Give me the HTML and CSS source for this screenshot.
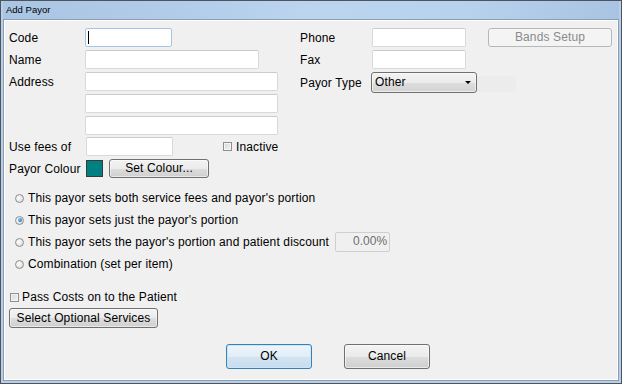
FILE: index.html
```html
<!DOCTYPE html>
<html>
<head>
<meta charset="utf-8">
<link rel="stylesheet" href="styles.css">
</head>
<body>
<div class="window">
  <div class="titlebar">Add Payor</div>
  <div class="client">
    <div class="top">
      <div class="leftcol">
        <div class="row"><span class="label">Code</span><div class="input focused w87"><span class="caret"></span></div></div>
        <div class="row"><span class="label">Name</span><div class="input w174"></div></div>
        <div class="row"><span class="label">Address</span><div class="input w193"></div></div>
        <div class="row"><span class="label"></span><div class="input w193"></div></div>
        <div class="row"><span class="label"></span><div class="input w193"></div></div>
        <div class="row row-fees"><span class="label label77">Use fees of</span><div class="input w87"></div>
          <span class="check inactive-check"></span><span class="checktext">Inactive</span></div>
        <div class="row row-last"><span class="label label77">Payor Colour</span><span class="swatch"></span><div class="btn btn-colour">Set Colour...</div></div>
      </div>
      <div class="rightcol">
        <div class="row"><span class="label label72">Phone</span><div class="input w94"></div><div class="btn btn-disabled btn-bands">Bands Setup</div></div>
        <div class="row"><span class="label label72">Fax</span><div class="input w94"></div></div>
        <div class="row row-select"><span class="label label71">Payor Type</span><div class="select">Other<span class="arrow"></span></div><span class="ghost"></span></div>
      </div>
    </div>
    <div class="radios">
      <div class="radio-row"><span class="radio"></span><span>This payor sets both service fees and payor's portion</span></div>
      <div class="radio-row"><span class="radio selected"></span><span>This payor sets just the payor's portion</span></div>
      <div class="radio-row"><span class="radio"></span><span>This payor sets the payor's portion and patient discount</span><div class="input disabled pct">0.00%</div></div>
      <div class="radio-row"><span class="radio"></span><span>Combination (set per item)</span></div>
    </div>
    <div class="pass-row"><span class="check"></span><span class="checktext">Pass Costs on to the Patient</span></div>
    <div class="btn btn-optional">Select Optional Services</div>
    <div class="actions">
      <div class="btn btn-action btn-default">OK</div>
      <div class="btn btn-action">Cancel</div>
    </div>
  </div>
</div>
</body>
</html>
```

FILE: styles.css
```css
* { box-sizing: border-box; }
html, body { margin: 0; padding: 0; background: #f0f0f0; }
body { font-family: "Liberation Sans", Arial, sans-serif; font-size: 12px; letter-spacing: 0.13px; color: #000; }

.window {
  width: 622px; height: 384px;
  border: 1px solid #4f545b;
  background: #b7cfe9;
  padding: 0 2px 2px;
  display: flex; flex-direction: column;
}
.titlebar {
  height: 18px; flex: none;
  padding-left: 3px;
  font-size: 9.5px; line-height: 17px; letter-spacing: 0;
  color: #000;
  background: linear-gradient(90deg, #a9c5e3 0%, #b2cdea 30%, #bbd5ef 50%, #b7d2ed 75%, #a8c4e2 100%);
}
.client {
  flex: 1;
  border: 1px solid #8d9db2;
  box-shadow: inset 1px 1px 0 #ffffff, inset -1px -1px 0 #ffffff;
  background: #f0f0f0;
  padding: 8px 5px 0 5px;
}

.top { display: flex; align-items: flex-start; }
.leftcol { width: 268px; display: flex; flex-direction: column; }
.rightcol { margin-left: 23px; display: flex; flex-direction: column; }

.row { display: flex; align-items: center; height: 19px; margin-bottom: 3px; }
.row-fees { margin-top: -1px; }
.row-last { margin-bottom: 0; }
.row-select { height: 21px; }
.label { width: 76px; flex: none; white-space: nowrap; }
.label77 { width: 77px; }
.label72 { width: 72px; }
.label71 { width: 71px; }

.input {
  height: 19px; flex: none;
  background: #fff;
  border: 1px solid #d7d9dd;
  border-top-color: #c9cbd0;
  border-radius: 2px;
  position: relative;
}
.w87 { width: 87px; }
.w94 { width: 94px; }
.w174 { width: 174px; }
.w193 { width: 193px; }
.focused { border-color: #a7c4e4; }
.caret {
  position: absolute; left: 2px; top: 2px;
  width: 1px; height: 13px; background: #000;
}
.disabled {
  background: #f0f0f0; border-color: #cfcfcf;
  color: #6d6d6d; text-align: right; padding-right: 2px; line-height: 17px;
}

.check {
  width: 9px; height: 9px; flex: none;
  border: 1px solid #8e8f8f;
  background: linear-gradient(135deg, #d6d6d6, #f6f6f6);
  box-shadow: inset 0 0 0 1px #f4f4f4;
}
.inactive-check { margin-left: 50px; }
.checktext { margin-left: 4px; }

.swatch {
  width: 17px; height: 17px; flex: none;
  background: #008080; border: 1px solid #3a3a3a;
}

.btn {
  flex: none;
  border: 1px solid #707070; border-radius: 3px;
  background: linear-gradient(#f3f3f3 0%, #ebebeb 50%, #dddddd 51%, #cfcfcf 100%);
  box-shadow: inset 0 0 0 1px rgba(255,255,255,0.55);
  text-align: center; white-space: nowrap;
}
.btn-colour { width: 100px; height: 19px; line-height: 17px; margin-left: 6px; }
.btn-disabled {
  border-color: #b4b8bb; background: #f4f4f4; box-shadow: none; color: #8a8a8a;
}
.btn-bands { width: 124px; height: 19px; line-height: 17px; margin-left: 22px; }

.select {
  width: 106px; height: 21px; flex: none;
  border: 1px solid #707070; border-radius: 3px;
  background: linear-gradient(#f3f3f3 0%, #ebebeb 50%, #dddddd 51%, #d4d4d4 100%);
  box-shadow: inset 0 0 0 1px rgba(255,255,255,0.6);
  padding-left: 3px; line-height: 19px;
  position: relative;
}
.arrow {
  position: absolute; right: 5px; top: 8px;
  width: 0; height: 0;
  border-left: 3px solid transparent; border-right: 3px solid transparent;
  border-top: 3px solid #000;
}
.ghost { width: 39px; height: 16px; margin-top: 3px; background: #ececec; }

.radios { margin-top: 9px; }
.radio-row { display: flex; align-items: center; height: 22px; }
.radio {
  width: 9px; height: 9px; flex: none;
  margin-left: 6px; margin-right: 4px;
  border-radius: 50%;
  border: 1px solid #8e8f8f;
  background: radial-gradient(circle at 40% 40%, #ffffff 0%, #e8e8e8 50%, #cfcfcf 100%);
  position: relative;
}
.radio.selected::after {
  content: ""; position: absolute; left: 1.5px; top: 1.5px;
  width: 4px; height: 4px; border-radius: 50%;
  background: radial-gradient(circle at 35% 35%, #7fc0f5, #1a5ca8);
}
.pct { width: 55px; height: 20px; margin-left: 6px; letter-spacing: 0; }

.pass-row { display: flex; align-items: center; height: 18px; margin-top: 13px; padding-left: 1px; }
.pass-row .checktext { margin-left: 3px; }

.btn-optional { width: 149px; height: 20px; line-height: 18px; margin-top: 2px; }

.actions { display: flex; gap: 32px; margin-top: 16px; margin-left: 217px; }
.btn-action { width: 86px; height: 25px; line-height: 23px; }
.btn-default {
  border-color: #3c7fb1;
  background: linear-gradient(#eef5fb 0%, #e1edf7 50%, #d2e4f2 51%, #c6dcee 100%);
  box-shadow: inset 0 0 0 1px #cbe6f8;
}
```
